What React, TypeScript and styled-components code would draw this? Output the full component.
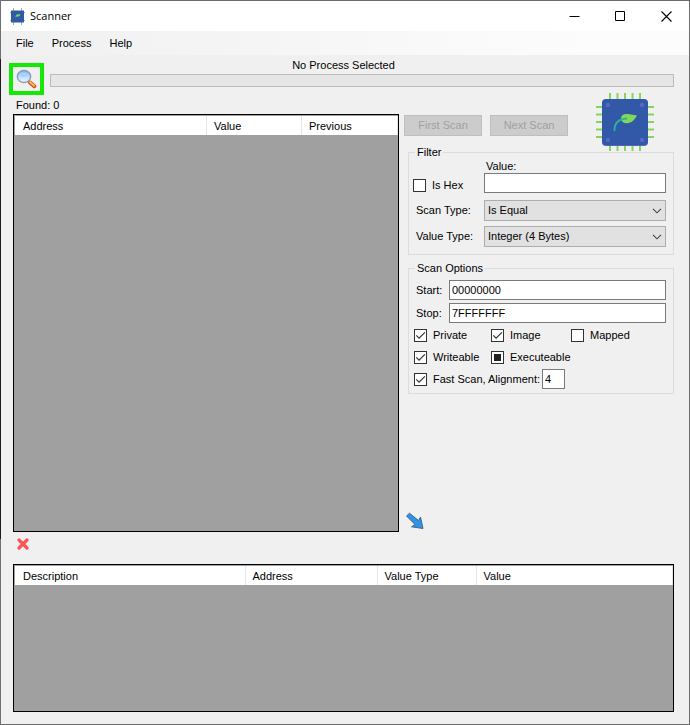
import React, { useEffect, useRef } from 'react';
import styled, { createGlobalStyle } from 'styled-components';

const GlobalStyle = createGlobalStyle`
  *, *::before, *::after { box-sizing: border-box; }
  body { margin: 0; background: #f0f0f0; }
  body, button, input, select {
    font-family: "Liberation Sans", Arial, sans-serif;
    font-size: 11px;
    line-height: 13px;
    color: #000;
  }
`;

const Frame = styled.div`
  display: flex;
  flex-direction: column;
  min-height: 100vh;
  padding: 1px;
  background:
    linear-gradient(#707070 0 59px, #1c1c1c 59px 539px, #707070 539px) left / 1px 100% no-repeat,
    #6b6b6b;
`;

const TitleBar = styled.header`
  display: flex;
  align-items: center;
  height: 30px;
  padding-left: 8px;
  background: #fff;
`;

const Title = styled.h1`
  flex: 1;
  margin: 0 0 0 4px;
  font: 400 11px/16px "Open Sans", "Noto Sans", sans-serif;
`;

const CaptionButton = styled.button`
  display: grid;
  place-items: center;
  width: 46px;
  height: 28px;
  padding: 0;
  border: 0;
  background: transparent;
`;

const MenuBar = styled.nav`
  display: flex;
  align-items: center;
  height: 24px;
  padding-left: 6px;
  background: linear-gradient(90deg, #f0f0f0, #fcfcfc 85%);
`;

const MenuItem = styled.button`
  padding: 4px 9px;
  border: 0;
  background: transparent;
`;

const Client = styled.main`
  flex: 1;
  display: flex;
  flex-direction: column;
  padding: 4px 15px 12px 12px;
  background: #f0f0f0;
`;

const Toolbar = styled.div`
  display: flex;
  gap: 6px;
  height: 34px;
  margin-left: -4px;
`;

const PickButton = styled.button`
  display: grid;
  place-items: center;
  flex: none;
  width: 35px;
  height: 32px;
  margin-top: 4px;
  padding: 0;
  border: 4px solid #16e805;
  background: #f0f0f0;
`;

const Status = styled.div`
  flex: 1;
`;

const StatusText = styled.div`
  padding: 0 37px 2px 0;
  text-align: center;
`;

const ProgressTrack = styled.div`
  height: 13px;
  border: 1px solid #bcbcbc;
  background: #e6e6e6;
`;

const Workspace = styled.div`
  flex: 1;
  display: grid;
  grid-template-columns: minmax(0, 1fr) 270px;
  gap: 5px;
`;

const Results = styled.section`
  display: flex;
  flex-direction: column;
`;

const Found = styled.div`
  padding: 6px 3px 2px;
`;

const GridPanel = styled.div<{ $fill?: boolean }>`
  flex: ${(p) => (p.$fill ? '1' : 'none')};
  min-height: 148px;
  padding: 1px 0 0 1px;
  border: 1px solid #000;
  background: #a0a0a0;
`;

const DataTable = styled.table`
  width: 100%;
  table-layout: fixed;
  border-collapse: collapse;
  background: #fff;
`;

const HeadCell = styled.th<{ $width?: number }>`
  width: ${(p) => (p.$width ? `${p.$width}px` : 'auto')};
  height: 19px;
  padding: 2px 7px 0;
  border-right: 1px solid #e5e5e5;
  font-weight: 400;
  text-align: left;
  &:first-child { padding-left: 8px; }
`;

const Side = styled.aside`
  display: flex;
  flex-direction: column;
`;

const Actions = styled.div`
  display: flex;
  align-items: flex-start;
  gap: 8px;
  height: 53px;
`;

const ScanButton = styled.button`
  width: 78px;
  height: 21px;
  margin-top: 22px;
  padding: 0;
  border: 1px solid #bfbfbf;
  background: #ccc;
  color: #a0a0a0;
`;

const LogoSlot = styled.div`
  flex: 1;
  display: flex;
  justify-content: flex-end;
  padding-right: 20px;
`;

const Group = styled.fieldset<{ $bottom: number }>`
  display: flex;
  flex-direction: column;
  min-width: 0;
  margin: 0 0 7px 4px;
  padding: 0 7px ${(p) => p.$bottom}px 5px;
  border: 1px solid #dcdcdc;
`;

const GroupTitle = styled.legend`
  margin-left: 1px;
  padding: 0 2px;
  line-height: 13px;
`;

const FilterGrid = styled.div`
  display: grid;
  grid-template-columns: 70px 1fr;
  align-items: center;
  row-gap: 5px;
`;

const ValueField = styled.div`
  display: flex;
  flex-direction: column;
  padding-bottom: 2px;
`;

const ValueLabel = styled.label`
  padding: 1px 2px 0;
`;

const HexSlot = styled.div`
  align-self: end;
  margin-left: -1px;
`;

const RowLabel = styled.label`
  padding-left: 2px;
`;

const TextBox = styled.input`
  width: 100%;
  min-width: 0;
  height: 20px;
  padding: 0 2px;
  border: 1px solid #7a7a7a;
  border-radius: 0;
  background: #fff;
`;

const SmallTextBox = styled(TextBox)`
  width: 23px;
`;

const SelectWrap = styled.div`
  display: grid;
  align-items: center;
  & > * { grid-area: 1 / 1; }
  & > svg { justify-self: end; margin-right: 4px; pointer-events: none; }
`;

const Select = styled.select`
  appearance: none;
  width: 100%;
  height: 21px;
  padding: 0 20px 0 3px;
  border: 1px solid #adadad;
  border-radius: 0;
  background: #e1e1e1;
`;

const RangeGrid = styled.div`
  display: grid;
  grid-template-columns: 35px 1fr;
  align-items: center;
  row-gap: 3px;
  padding-top: 5px;
`;

const Checks = styled.div`
  display: grid;
  grid-template-columns: 77px 80px 1fr;
  row-gap: 2px;
  padding-top: 2px;
`;

const AlignRow = styled.div`
  grid-column: 1 / -1;
  display: flex;
  align-items: center;
  gap: 2px;
  height: 20px;
`;

const CheckLabel = styled.label`
  display: flex;
  align-items: center;
  gap: 6px;
  height: 20px;
  white-space: nowrap;
`;

const CheckBoxWrap = styled.span`
  display: grid;
  place-items: center;
  & > * { grid-area: 1 / 1; }
  & > svg { pointer-events: none; }
`;

const CheckInput = styled.input`
  appearance: none;
  width: 13px;
  height: 13px;
  margin: 0;
  border: 1px solid #333;
  background: #fff;
`;

const IconButton = styled.button`
  display: flex;
  align-self: flex-start;
  padding: 0;
  border: 0;
  background: transparent;
`;

const Spacer = styled.div`
  flex: 1;
`;

const DeleteRow = styled.div`
  display: flex;
  padding: 6px 4px 14px;
`;

type CheckState = 'on' | 'off' | 'mixed';

function Check({ label, state }: { label: string; state: CheckState }) {
  const ref = useRef<HTMLInputElement>(null);
  useEffect(() => {
    if (ref.current) ref.current.indeterminate = state === 'mixed';
  }, [state]);
  return (
    <CheckLabel>
      <CheckBoxWrap>
        <CheckInput ref={ref} type="checkbox" checked={state === 'on'} readOnly />
        {state === 'on' && (
          <svg width="13" height="13" viewBox="0 0 13 13" aria-hidden="true">
            <path d="M2.3 6.4 5.1 9.2 10.9 3.4" fill="none" stroke="#333" strokeWidth="1.2" />
          </svg>
        )}
        {state === 'mixed' && (
          <svg width="13" height="13" viewBox="0 0 13 13" aria-hidden="true">
            <path d="M3 3h7v7H3z" fill="#222" />
          </svg>
        )}
      </CheckBoxWrap>
      {label}
    </CheckLabel>
  );
}

function ChipLogo({ size }: { size: number }) {
  const pins = [14, 21.5, 29, 36.5, 44];
  return (
    <svg width={size} height={size} viewBox="0 0 58 58" aria-hidden="true">
      <g stroke="#83d65b" strokeWidth="2">
        {pins.map((p) => (
          <path key={p} d={`M${p} 0V58M0 ${p}H58`} />
        ))}
      </g>
      <rect x="6" y="7" width="46" height="46" rx="4" fill="#5566b8" />
      <rect x="6" y="6" width="46" height="46" rx="4" fill="#3159a7" />
      <g fill="#5c66c4">
        <circle cx="12" cy="12" r="2.2" />
        <circle cx="46" cy="12" r="2.2" />
        <circle cx="12" cy="47" r="2.2" />
        <circle cx="46" cy="47" r="2.2" />
      </g>
      <path d="M25 25C25.500 21.500 28 20.500 32 21L41 22.500C38.500 27 35.500 30.500 30 30.200 27 30 25 28 25 25Z" fill="#83d65b" />
      <path d="M18.500 38C18.200 31 22 26 31 25.500" fill="none" stroke="#27b49b" strokeWidth="1.800" />
    </svg>
  );
}

function TinyChip() {
  return (
    <svg width="17" height="17" viewBox="0 0 17 17" aria-hidden="true">
      <path d="M4.500 0V17M12.500 0V17M1 4.500H16M1 12.500H16" stroke="#83c97a" />
      <path d="M2 2.500H15V14.500H2z" fill="#3159a7" />
      <path d="M6.500 8.500C7 6 9 6 11.500 6.500 10.500 8.500 9 9 7 8.500L5.500 10" fill="#74d35f" />
    </svg>
  );
}

function Magnifier() {
  return (
    <svg width="21" height="20" viewBox="0 0 21 20" aria-hidden="true">
      <defs>
        <linearGradient id="lens" x1="0" y1="0" x2="0" y2="1">
          <stop offset="0" stopColor="#7fb4f2" />
          <stop offset=".6" stopColor="#c3e2fd" />
          <stop offset="1" stopColor="#f0fbff" />
        </linearGradient>
      </defs>
      <path d="M11.500 11.500 14.500 14" stroke="#8d8d8d" strokeWidth="2.500" />
      <path d="M14 13.500 18.300 17.300" stroke="#d4582b" strokeWidth="4" strokeLinecap="round" />
      <path d="M14 13 18 16.600" stroke="#ffbd55" strokeWidth="1.800" strokeLinecap="round" />
      <ellipse cx="8" cy="7.500" rx="6.700" ry="6" fill="url(#lens)" stroke="#8d9cb5" strokeWidth="1.400" />
      <ellipse cx="7.500" cy="5.500" rx="3.500" ry="2" fill="#a9d0fa" />
    </svg>
  );
}

const Chevron = () => (
  <svg width="10" height="6" viewBox="0 0 10 6" aria-hidden="true">
    <path d="M1 .8 5 4.800 9 .8" fill="none" stroke="#444" strokeWidth="1.100" />
  </svg>
);

function Combo({ id, value }: { id: string; value: string }) {
  return (
    <SelectWrap>
      <Select id={id} defaultValue={value}>
        <option>{value}</option>
      </Select>
      <Chevron />
    </SelectWrap>
  );
}

export default function App() {
  return (
    <>
      <GlobalStyle />
      <Frame>
        <TitleBar>
          <TinyChip />
          <Title>Scanner</Title>
          <CaptionButton aria-label="Minimize">
            <svg width="11" height="11" viewBox="0 0 11 11"><path d="M.5 5.500H10.500" stroke="#000" /></svg>
          </CaptionButton>
          <CaptionButton aria-label="Maximize">
            <svg width="11" height="11" viewBox="0 0 11 11"><path d="M.5.5h9v9h-9z" fill="none" stroke="#000" /></svg>
          </CaptionButton>
          <CaptionButton aria-label="Close">
            <svg width="11" height="11" viewBox="0 0 11 11"><path d="M.5.5 10.500 10.500M10.500.5.5 10.500" stroke="#000" strokeWidth="1.100" /></svg>
          </CaptionButton>
        </TitleBar>
        <MenuBar>
          <MenuItem>File</MenuItem>
          <MenuItem>Process</MenuItem>
          <MenuItem>Help</MenuItem>
        </MenuBar>
        <Client>
          <Toolbar>
            <PickButton aria-label="Select process"><Magnifier /></PickButton>
            <Status>
              <StatusText>No Process Selected</StatusText>
              <ProgressTrack role="progressbar" aria-label="Scan progress" aria-valuenow={0} />
            </Status>
          </Toolbar>
          <Workspace>
            <Results>
              <Found>Found: 0</Found>
              <GridPanel $fill>
                <DataTable>
                  <thead>
                    <tr>
                      <HeadCell>Address</HeadCell>
                      <HeadCell $width={95}>Value</HeadCell>
                      <HeadCell $width={96}>Previous</HeadCell>
                    </tr>
                  </thead>
                </DataTable>
              </GridPanel>
            </Results>
            <Side>
              <Actions>
                <ScanButton disabled>First Scan</ScanButton>
                <ScanButton disabled>Next Scan</ScanButton>
                <LogoSlot><ChipLogo size={58} /></LogoSlot>
              </Actions>
              <Group $bottom={7}>
                <GroupTitle>Filter</GroupTitle>
                <FilterGrid>
                  <HexSlot><Check label="Is Hex" state="off" /></HexSlot>
                  <ValueField>
                    <ValueLabel htmlFor="value">Value:</ValueLabel>
                    <TextBox id="value" />
                  </ValueField>
                  <RowLabel htmlFor="scan-type">Scan Type:</RowLabel>
                  <Combo id="scan-type" value="Is Equal" />
                  <RowLabel htmlFor="value-type">Value Type:</RowLabel>
                  <Combo id="value-type" value="Integer (4 Bytes)" />
                </FilterGrid>
              </Group>
              <Group $bottom={4}>
                <GroupTitle>Scan Options</GroupTitle>
                <RangeGrid>
                  <RowLabel htmlFor="start">Start:</RowLabel>
                  <TextBox id="start" defaultValue="00000000" />
                  <RowLabel htmlFor="stop">Stop:</RowLabel>
                  <TextBox id="stop" defaultValue="7FFFFFFF" />
                </RangeGrid>
                <Checks>
                  <Check label="Private" state="on" />
                  <Check label="Image" state="on" />
                  <Check label="Mapped" state="off" />
                  <Check label="Writeable" state="on" />
                  <Check label="Executeable" state="mixed" />
                  <AlignRow>
                    <Check label="Fast Scan, Alignment:" state="on" />
                    <SmallTextBox aria-label="Alignment" defaultValue="4" />
                  </AlignRow>
                </Checks>
              </Group>
              <Spacer />
              <IconButton aria-label="Add to list">
                <svg width="22" height="20" viewBox="0 0 22 20">
                  <path d="M2.500 4 5.500 1.200 14.500 8.500 16.500 5 19 16.500 7.500 14.800 11 12.500Z" fill="#2f92e6" stroke="#44698c" />
                </svg>
              </IconButton>
            </Side>
          </Workspace>
          <DeleteRow>
            <IconButton aria-label="Remove from list">
              <svg width="12" height="12" viewBox="0 0 12 12">
                <path d="M2 2 10 10M10 2 2 10" stroke="#fa5457" strokeWidth="3.200" strokeLinecap="round" />
              </svg>
            </IconButton>
          </DeleteRow>
          <GridPanel>
            <DataTable>
              <thead>
                <tr>
                  <HeadCell $width={230}>Description</HeadCell>
                  <HeadCell $width={132}>Address</HeadCell>
                  <HeadCell $width={99}>Value Type</HeadCell>
                  <HeadCell>Value</HeadCell>
                </tr>
              </thead>
            </DataTable>
          </GridPanel>
        </Client>
      </Frame>
    </>
  );
}
